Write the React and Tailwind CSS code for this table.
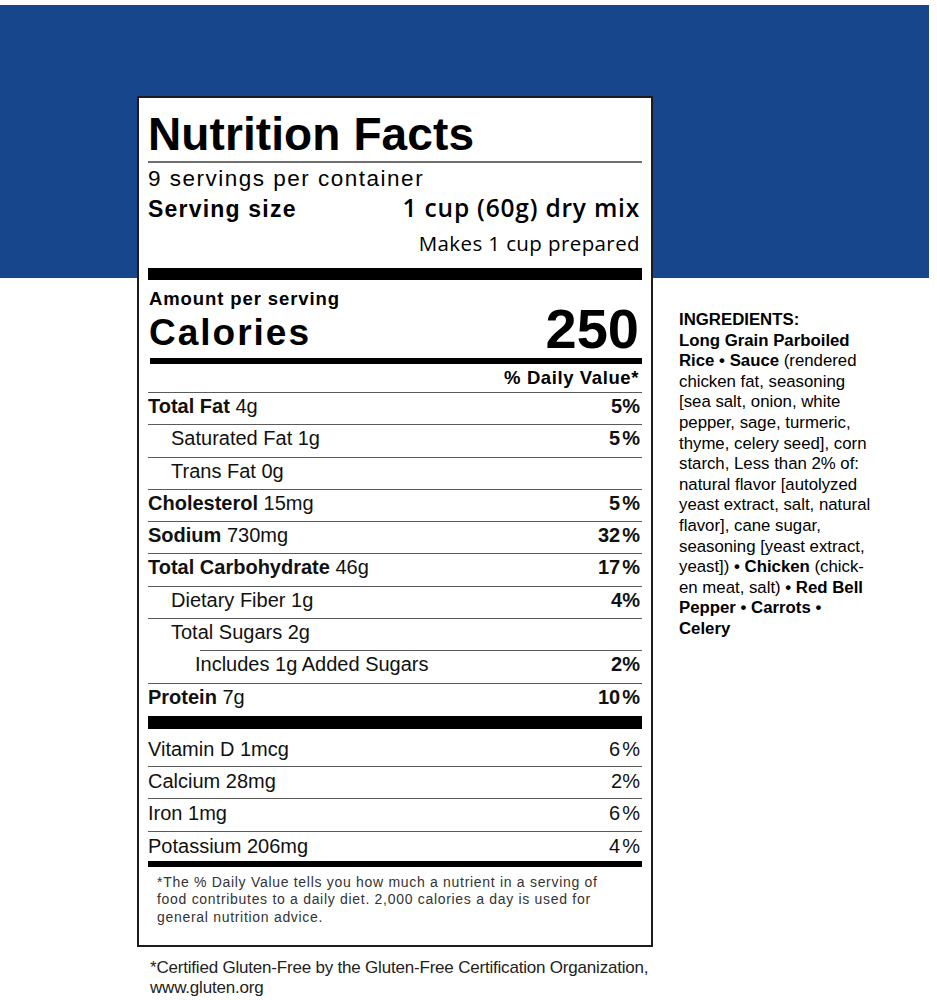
import React from 'react';

const sans = { fontFamily: '"Liberation Sans", Arial, sans-serif' };
const humanist = { fontFamily: '"Open Sans", "Noto Sans", sans-serif' };

const nutrients = [
  { name: 'Total Fat', amount: '4g', dv: '5', bold: true },
  { name: 'Saturated Fat', amount: '1g', dv: '5', indent: 1, gap: true },
  { name: 'Trans Fat', amount: '0g', indent: 1 },
  { name: 'Cholesterol', amount: '15mg', dv: '5', bold: true, gap: true },
  { name: 'Sodium', amount: '730mg', dv: '32', bold: true, gap: true },
  { name: 'Total Carbohydrate', amount: '46g', dv: '17', bold: true, gap: true },
  { name: 'Dietary Fiber', amount: '1g', dv: '4', indent: 1 },
  { name: 'Total Sugars', amount: '2g', indent: 1 },
  { name: 'Includes 1g Added Sugars', amount: '', dv: '2', indent: 2 },
  { name: 'Protein', amount: '7g', dv: '10', bold: true, gap: true, last: true },
];

const vitamins = [
  { label: 'Vitamin D 1mcg', dv: '6', gap: true },
  { label: 'Calcium 28mg', dv: '2' },
  { label: 'Iron 1mg', dv: '6', gap: true },
  { label: 'Potassium 206mg', dv: '4', gap: true },
];

function Pct({ value, gap }) {
  return (
    <span>
      {value}
      <span className={gap ? 'ml-[2px]' : ''}>%</span>
    </span>
  );
}

function NutrientRow({ item }) {
  const textPad = item.indent === 2 ? 'pl-[47px]' : item.indent === 1 ? 'pl-[23px]' : '';
  const linePad = item.indent === 2 ? 'ml-[52px]' : '';
  return (
    <div>
      <div className={`h-px bg-[#5a5a5a] ${linePad}`} />
      <div
        className={`flex justify-between pt-[1px] pr-[2px] leading-[24px] text-[20px] text-[#111] ${textPad} ${
          item.last ? 'h-[32.3px]' : 'h-[31.3px]'
        }`}
      >
        <span>
          {item.bold ? <span className="font-bold">{item.name}</span> : item.name}
          {item.amount ? ` ${item.amount}` : ''}
        </span>
        {item.dv && (
          <span className="font-bold">
            <Pct value={item.dv} gap={item.gap} />
          </span>
        )}
      </div>
    </div>
  );
}

export default function App() {
  return (
    <div className="relative w-[937px] h-[1000px] bg-white overflow-hidden" style={sans}>
      {/* blue band behind the label */}
      <div className="absolute left-0 top-[5px] w-[929px] h-[273px] bg-[#18468c]" />

      <div className="relative flex pt-[96px]">
        {/* label column */}
        <div className="ml-[137px] w-[516px]">
          <div className="border-2 border-[#1c1c1c] bg-white pl-[9px] pr-[9px] pt-[13px] pb-[18px]">
            <h1 className="text-[46px] font-bold leading-[46px] text-black tracking-[0.1px]">Nutrition Facts</h1>
            <div className="mt-[4px] h-[2px] bg-[#707070]" />
            <div className="mt-[3px] h-[26px] text-[22.5px] leading-[26px] text-black tracking-[1.5px]">
              9 servings per container
            </div>
            <div className="flex justify-between items-baseline h-[32px] leading-[32px]">
              <span className="text-[23px] font-bold text-black tracking-[1.2px]">Serving size</span>
              <span className="text-[24.5px] font-semibold text-black pr-[2px] tracking-[0.8px]" style={humanist}>
                1 cup (60g) dry mix
              </span>
            </div>
            <div
              className="mt-[6px] h-[26px] text-right text-[20.5px] font-medium leading-[26px] text-black pr-[2px] tracking-[0.4px]"
              style={humanist}
            >
              Makes 1 cup prepared
            </div>
            <div className="mt-[12px] h-[12px] bg-black" />

            <div className="flex justify-between items-end">
              <div className="pl-[1px]">
                <div className="mt-[9px] h-[20px] text-[18.5px] font-bold leading-[20px] text-black tracking-[0.9px]">
                  Amount per serving
                </div>
                <div className="mt-[5px] mb-[6px] text-[37px] font-bold leading-[37px] text-black tracking-[2px]">
                  Calories
                </div>
              </div>
              <div className="text-[56px] font-bold leading-[56px] text-black pr-[3px]">250</div>
            </div>
            <div className="mt-[1px] ml-[2px] h-[6px] bg-black" />
            <div className="h-[28px] text-right text-[18.5px] font-bold leading-[28px] text-black pr-[3px] tracking-[0.6px]">
              % Daily Value*
            </div>

            {nutrients.map((item) => (
              <NutrientRow key={item.name} item={item} />
            ))}

            <div className="h-[13px] bg-black" />

            <div className="text-[20px] text-[#111]">
              {vitamins.map((v, i) => (
                <div key={v.label}>
                  {i > 0 && <div className="h-px bg-[#5a5a5a]" />}
                  <div
                    className={`flex justify-between pr-[2px] leading-[24px] ${
                      i === 0 ? 'h-[36.7px] pt-[8px]' : i === 3 ? 'h-[29.7px] pt-[2px]' : 'h-[31.5px] pt-[2px]'
                    }`}
                  >
                    <span>{v.label}</span>
                    <Pct value={v.dv} gap={v.gap} />
                  </div>
                </div>
              ))}
            </div>

            <div className="h-[6px] bg-black" />
            <p className="pt-[6.5px] pl-[9px] text-[14px] leading-[17.6px] text-[#333] tracking-[0.7px] whitespace-nowrap">
              *The % Daily Value tells you how much a nutrient in a serving of
              <br />
              food contributes to a daily diet. 2,000 calories a day is used for
              <br />
              general nutrition advice.
            </p>
          </div>
          <p className="mt-[11px] pl-[13px] text-[17px] leading-[20px] text-[#222] tracking-[-0.2px] whitespace-nowrap">
            *Certified Gluten-Free by the Gluten-Free Certification Organization,
            <br />
            www.gluten.org
          </p>
        </div>

        {/* ingredients column */}
        <div className="ml-[26px] pt-[214px] text-[16.8px] leading-[20.6px] text-black whitespace-nowrap">
          <div className="font-bold">INGREDIENTS:</div>
          <div className="font-bold">Long Grain Parboiled</div>
          <div>
            <span className="font-bold">Rice • Sauce</span> (rendered
          </div>
          <div>chicken fat, seasoning</div>
          <div>[sea salt, onion, white</div>
          <div>pepper, sage, turmeric,</div>
          <div>thyme, celery seed], corn</div>
          <div>starch, Less than 2% of:</div>
          <div>natural flavor [autolyzed</div>
          <div>yeast extract, salt, natural</div>
          <div>flavor], cane sugar,</div>
          <div>seasoning [yeast extract,</div>
          <div>
            yeast]) <span className="font-bold">• Chicken</span> (chick-
          </div>
          <div>
            en meat, salt) <span className="font-bold">• Red Bell</span>
          </div>
          <div className="font-bold">Pepper • Carrots •</div>
          <div className="font-bold">Celery</div>
        </div>
      </div>
    </div>
  );
}
